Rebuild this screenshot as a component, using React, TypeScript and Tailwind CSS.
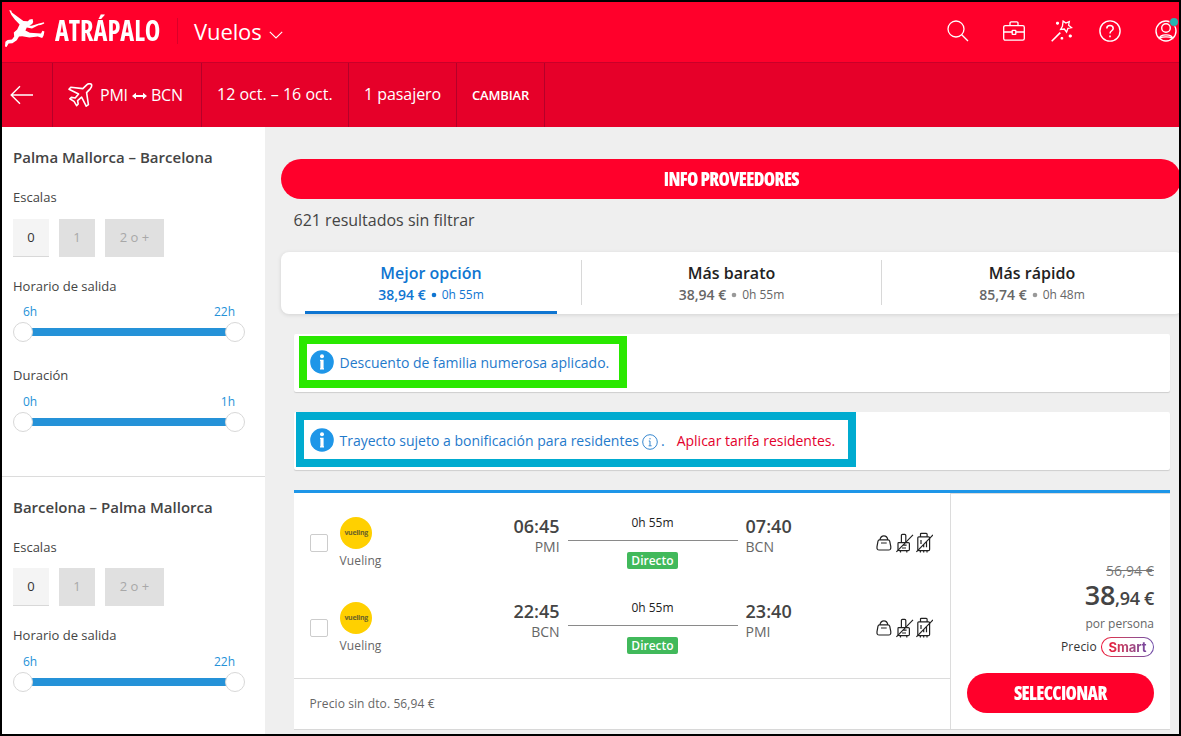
import type { ReactNode } from "react";

function Runner() {
  return (
    <svg width="40" height="38" viewBox="0 0 40 38" fill="#fff" className="shrink-0">
      <path d="M4.2 0.2L6.2 0.4L6.9 2.6L18.4 11L22.8 11.2L24.6 9.4L27.6 9L28.2 12L27.2 14L24.4 15.4L26.6 15.8L34 13.4L39 12.2L39.2 13.4L35.8 15L33.4 15.2L27 18.4L21.8 17.6L20.4 20.6L24.8 22.8L36 23.6L37.4 20.8L39.4 21.4L38.6 25.4L37.2 28L32.8 26.6L24.4 27.6L17.2 26.2L14 26.4L11.8 30.2L7.4 33.2L3.6 33.4L1.6 37L0 36.6L0.4 31.8L2.6 30L7 29.6L9.2 26.4L8.8 22.6L12.2 19.6L14.6 14.6L9.8 9.6L6.4 5Z" />
    </svg>
  );
}

function PillButton({ className, children }: { className: string; children: ReactNode }) {
  return (
    <button className={`h-10 shrink-0 rounded-full bg-[#ff002b] text-[19px] font-extrabold text-white [font-stretch:75%] ${className}`}>
      <span className="inline-block scale-x-[0.96] tracking-[-0.65px]">{children}</span>
    </button>
  );
}

function Header() {
  return (
    <header className="flex h-[61px] shrink-0 border-b border-[#c90029] bg-[#ff002b] text-white">
      <div className="flex w-[175px] shrink-0 pl-[3px] pt-2">
        <Runner />
        <span className="ml-[10px] inline-block h-[38px] origin-left scale-x-[0.907] text-[29px] leading-[40px] font-bold [font-stretch:75%]">
          ATRÁPALO
        </span>
      </div>
      <div className="mt-4 h-[26px] w-px bg-[#db0029]" />
      <div className="flex h-[58px] items-center pl-4">
        <span className="text-[22px] leading-[30px] tracking-[-0.1px]">Vuelos</span>
        <svg width="14" height="8" viewBox="0 0 14 8" fill="none" stroke="#fff" strokeWidth="1.1" className="mt-[7px] ml-[7px]">
          <path d="M0.8 0.8L7 7L13.2 0.8" />
        </svg>
      </div>
      <div className="ml-auto flex h-[58px] shrink-0 items-center">
        <svg width="22" height="22" viewBox="0 0 22 22" fill="none" stroke="#fff" strokeWidth="1.3" className="mr-[34px]">
          <circle cx="9" cy="9" r="8" />
          <path d="M14.7 14.7L21 21" />
        </svg>
        <svg width="22" height="20" viewBox="0 0 22 20" fill="none" stroke="#fff" strokeWidth="1.3" className="mr-[26px]">
          <rect x="0.7" y="4.6" width="20.6" height="14.6" rx="1.6" />
          <path d="M7 4.6V2.1A1.2 1.2 0 0 1 8.2 0.9H13.8A1.2 1.2 0 0 1 15 2.1V4.6M0.7 11H9.2M12.8 11H21.3" />
          <rect x="9.2" y="9.4" width="3.6" height="4" rx="0.4" />
        </svg>
        <svg width="22" height="22" viewBox="0 0 22 22" fill="none" stroke="#fff" strokeWidth="1.3" className="mr-[26px]">
          <path d="M0.7 21.2L9.3 12.6" strokeWidth="1.6" />
          <path d="M12.1 1.1L14.9 3.1L18.3 1.6L17.6 5.2L20.5 7.7L16.9 8.3L15.6 12.2L13.3 9L9.6 9.4L11.4 6.3Z" />
          <path d="M6.5 1.7V4.7M5 3.2H8M19.3 14.5V17.5M17.8 16H20.8M10.9 17V19.6M9.6 18.3H12.2" strokeWidth="1.8" />
        </svg>
        <svg width="22" height="22" viewBox="0 0 22 22" fill="none" stroke="#fff" strokeWidth="1.4" className="mr-[34px]">
          <circle cx="11" cy="11" r="10.1" />
          <path d="M7.8 8.5C7.8 4.6 14.2 4.6 14.2 8.5C14.2 10.9 11 10.7 11 13.6" strokeWidth="1.5" />
          <path d="M11 15.6V17.2" strokeWidth="1.6" />
        </svg>
        <svg width="24" height="26" viewBox="0 0 24 26" fill="none" stroke="#fff" strokeWidth="1.4" className="-mt-1">
          <circle cx="11" cy="15" r="10" />
          <circle cx="11" cy="12" r="4.3" />
          <path d="M4.6 22.2C5 17.8 17 17.8 17.4 22.2C14 20.4 8 20.4 4.6 22.2Z" />
          <circle cx="19" cy="6" r="4.6" fill="#ff002b" stroke="none" />
          <circle cx="19" cy="6" r="4" fill="#27b4b0" stroke="none" />
        </svg>
      </div>
    </header>
  );
}

function Cell({ width, children }: { width: string; children: ReactNode }) {
  return <div className={`${width} flex shrink-0 items-center border-r border-[#b50029]`}>{children}</div>;
}

function SearchBar() {
  return (
    <div className="flex h-16 shrink-0 bg-[#e60029] text-base leading-6 text-white">
      <Cell width="w-[51px]">
        <svg width="24" height="20" viewBox="0 0 24 20" fill="none" stroke="#fff" strokeWidth="1.4" className="ml-2">
          <path d="M23 10H1.2M10 1.2L1.2 10L10 18.8" />
        </svg>
      </Cell>
      <Cell width="w-[149px]">
        <svg width="25" height="24" viewBox="0 0 25 24" fill="none" stroke="#fff" strokeWidth="1.6" strokeLinejoin="round" className="ml-[15px]">
          <path d="M19 1.6C20.6 0.4 22.6 0.8 23.4 1.2C24 2.6 23.6 4.2 22.4 5.6L18.6 9.6L20.4 21.6L18.2 23.2L13.6 14.2L9.6 17.6L10.2 21L8.6 22.6L6 18.4L1.8 15.8L3.4 14.4L7.2 15L10.6 11L1 6.2L2.8 4.2L14.8 5.6Z" />
        </svg>
        <span className="ml-[7px] tracking-[-0.2px]">PMI</span>
        <svg width="15" height="8" viewBox="0 0 15 8" fill="#fff" className="mx-[4px] mt-[2px]">
          <path d="M0 4L4 0.8V3.1H11V0.8L15 4L11 7.2V4.9H4V7.2Z" />
        </svg>
        <span className="tracking-[-0.2px]">BCN</span>
      </Cell>
      <Cell width="w-[147px]">
        <span className="pb-[2px] pl-[15px]">12 oct. – 16 oct.</span>
      </Cell>
      <Cell width="w-[108px]">
        <span className="pb-[2px] pl-[15px] tracking-[-0.05px]">1 pasajero</span>
      </Cell>
      <Cell width="w-[88px]">
        <span className="pl-[15px] text-[13px] font-semibold tracking-[-0.15px]">CAMBIAR</span>
      </Cell>
    </div>
  );
}

function Range({ from, to }: { from: string; to: string }) {
  return (
    <div className="w-[232px]">
      <div className="flex h-[21px] justify-between px-[10px] text-xs leading-[22px] text-[#2592d8]">
        <span>{from}</span>
        <span>{to}</span>
      </div>
      <div className="flex h-5 items-center">
        <span className="z-10 size-5 shrink-0 rounded-full border border-[#d8d8d8] bg-white" />
        <span className="-mx-1 h-2 grow bg-[#2592d8]" />
        <span className="z-10 size-5 shrink-0 rounded-full border border-[#d8d8d8] bg-white" />
      </div>
    </div>
  );
}

function Stops() {
  return (
    <div className="flex h-[38px] gap-[10px] text-[13px]">
      <button className="w-9 border-b border-[#d8d8d8] bg-[#f4f4f4] pb-px text-[#333]">0</button>
      <button className="w-9 bg-[#e0e0e0] pb-[2px] text-[#a8a8a8]">1</button>
      <button className="w-[59px] bg-[#e0e0e0] pb-[2px] text-[#a8a8a8]">2 o +</button>
    </div>
  );
}

function Sidebar() {
  return (
    <aside className="w-[263px] shrink-0 bg-white text-[13px] leading-5 text-[#444]">
      <section className="h-[350px] border-b border-[#dcdcdc] pt-5 pl-[11px]">
        <h3 className="mb-5 text-[15px] font-semibold">Palma Mallorca – Barcelona</h3>
        <p className="mb-3">Escalas</p>
        <Stops />
        <p className="mt-[19px] mb-[5px]">Horario de salida</p>
        <Range from="6h" to="22h" />
        <p className="mt-[23px] mb-[6px]">Duración</p>
        <Range from="0h" to="1h" />
      </section>
      <section className="pt-5 pl-[11px]">
        <h3 className="mb-5 text-[15px] font-semibold">Barcelona – Palma Mallorca</h3>
        <p className="mb-[11px]">Escalas</p>
        <Stops />
        <p className="mt-[19px] mb-[6px]">Horario de salida</p>
        <Range from="6h" to="22h" />
      </section>
    </aside>
  );
}

function Tab({ title, price, time, active }: { title: string; price: string; time: string; active?: boolean }) {
  return (
    <div className={`w-full text-center ${active ? "text-[#0f75d1]" : "text-[#666]"}`}>
      <div className={`pt-[11px] text-base leading-5 font-semibold ${active ? "" : "text-[#222]"}`}>{title}</div>
      <div className="flex h-6 items-center justify-center text-xs">
        <b className="text-sm font-semibold">{price}</b>
        <svg width="16" height="6" viewBox="0 0 16 6" fill={active ? "#0f75d1" : "#999"}>
          <circle cx="8" cy="3" r="2.3" />
        </svg>
        <span>{time}</span>
      </div>
      {active && <div className="mt-1 ml-6 h-[3px] w-[252px] bg-[#0f75d1]" />}
    </div>
  );
}

function InfoDot() {
  return (
    <svg width="24" height="24" viewBox="0 0 24 24" className="shrink-0">
      <circle cx="12" cy="12" r="11.8" fill="#1e96e8" />
      <circle cx="12" cy="6.3" r="2" fill="#fff" />
      <path d="M10 9.8H13.6V18.2H14V19.6H10V18.2H10.4V11H10Z" fill="#fff" />
    </svg>
  );
}

function Luggage() {
  return (
    <svg width="57" height="22" viewBox="0 0 57 22" fill="none" stroke="#222" strokeWidth="1.2" strokeLinejoin="round">
      <path d="M3.4 7.8H12.2C13 7.8 13.4 8.3 13.7 9.1L14.8 14.7C15 17.1 14.2 18 12.6 18H3.2C1.6 18 0.7 17.1 1 14.7L2 9.1C2.2 8.3 2.6 7.8 3.4 7.8ZM3.9 7.8C4.4 5.4 5.8 3.8 7.9 3.8C10 3.8 11.4 5.4 11.9 7.8M5 11H10.7" />
      <path d="M25.4 10.6V3.4Q25.4 2.4 26.4 2.4H28.8Q29.8 2.4 29.8 3.4V10.6M22.6 10.6H32.4Q33.4 10.6 33.4 11.6V17.5Q33.4 18.7 32.2 18.7H23.2Q22 18.7 22 17.5V11.4Q22 10.6 22.6 10.6" />
      <path d="M27.4 13.1H30.6M26 16H30M24.5 18.7V20.4M30.8 18.7V20.4M20.4 19.8L37 2.8" />
      <path d="M44.5 4.8V2.2Q44.5 1.3 45.4 1.3H50.2Q51.1 1.3 51.1 2.2V4.8M42.8 4.8H52.6Q53.6 4.8 53.6 5.8V17.6Q53.6 18.7 52.5 18.7H42.9Q41.8 18.7 41.8 17.6V5.8Q41.8 4.8 42.8 4.8" />
      <path d="M45 8V12M50.5 10V15.2M47.7 12.5V15.2M44.4 18.7V20.4M47.7 18.7V20.4M51 18.7V20.4M40.4 19.8L57 2.8" />
    </svg>
  );
}

interface Leg {
  dep: string;
  from: string;
  arr: string;
  to: string;
}

function FlightRow({ dep, from, arr, to }: Leg) {
  return (
    <div className="flex h-[85px] text-[#444]">
      <span className="mt-[17px] ml-4 size-[18px] shrink-0 rounded-[2px] border border-[#ccc] bg-white" />
      <div className="ml-[11px] w-[52px] shrink-0 text-xs text-[#666]">
        <div className="ml-[1.4px] flex size-[31.5px] items-center justify-center rounded-full bg-[#ffd000] text-[7px] leading-none font-bold text-[#6b6329]">
          <span className="tracking-[-0.3px]">vueling</span>
        </div>
        <div className="h-5 pt-[2.5px] pl-[0.6px] leading-5 tracking-[0.1px]">Vueling</div>
      </div>
      <div className="w-[168.6px] shrink-0 text-right">
        <div className="text-lg leading-[18px] font-semibold">{dep}</div>
        <div className="pt-[3px] text-sm leading-[18px] text-[#666]">{from}</div>
      </div>
      <div className="ml-[8.4px] flex w-[170px] shrink-0 flex-col items-center">
        <span className="-mt-1 mr-px text-xs leading-[19px] text-[#222]">0h 55m</span>
        <span className="mt-2 h-px w-full bg-[#8a8a8a]" />
        <span className="mt-[11px] mr-px h-[17px] w-[51px] rounded-[2px] bg-[#41b95b] text-center text-xs leading-[17px] font-semibold text-white">
          Directo
        </span>
      </div>
      <div className="ml-[7.6px]">
        <div className="text-lg leading-[18px] font-semibold">{arr}</div>
        <div className="pt-[3px] text-sm leading-[18px] text-[#666]">{to}</div>
      </div>
      <div className="mt-[15px] mr-[17px] ml-auto">
        <Luggage />
      </div>
    </div>
  );
}

const LEGS: Leg[] = [
  { dep: "06:45", from: "PMI", arr: "07:40", to: "BCN" },
  { dep: "22:45", from: "BCN", arr: "23:40", to: "PMI" },
];

function ResultCard() {
  return (
    <article className="mt-5 ml-[13px] flex h-[240px] w-[876px] shrink-0 border-t-[3px] border-b border-t-[#1e96e8] border-b-[#d8d8d8] bg-white">
      <div className="flex w-[657px] shrink-0 flex-col border-r border-[#dcdcdc]">
        <div className="h-[186px] border-b border-[#dcdcdc] pt-6">
          {LEGS.map((leg) => (
            <FlightRow key={leg.dep} {...leg} />
          ))}
        </div>
        <div className="flex grow items-center pl-[15.5px] text-xs tracking-[0.1px] text-[#666]">Precio sin dto. 56,94 €</div>
      </div>
      <div className="flex grow flex-col items-end border-t border-[#dcdcdc] pt-[67px] pr-4 text-[#444]">
        <div className="text-sm leading-5 tracking-[0.1px] text-[#777] line-through">56,94 €</div>
        <div className="flex h-7 items-baseline leading-7 font-semibold tracking-[-0.3px]">
          <span className="text-[27px]">38</span>
          <span className="text-lg leading-7">,94 €</span>
        </div>
        <div className="mt-[5px] text-xs leading-5 text-[#666]">por persona</div>
        <div className="mt-[3px] flex h-5 items-center">
          <span className="mr-1 text-xs tracking-[0.2px] text-[#333]">Precio</span>
          <span className="inline-flex h-5 w-[53px] rounded-full bg-linear-to-r from-[#f0022f] to-[#6c4aa8] p-px">
            <span className="flex w-full items-center justify-center rounded-full bg-white">
              <span className="bg-linear-to-r from-[#f0022f] to-[#7447a0] bg-clip-text font-[Inter] text-[13px] leading-4 font-bold text-transparent">
                Smart
              </span>
            </span>
          </span>
        </div>
        <PillButton className="mt-4 w-[187px]">SELECCIONAR</PillButton>
      </div>
    </article>
  );
}

function Results() {
  return (
    <main className="flex grow flex-col overflow-hidden bg-[#efefef] pl-4">
      <PillButton className="mt-8 w-[900px]">INFO PROVEEDORES</PillButton>
      <p className="mt-[9px] ml-[12.5px] text-base leading-6 text-[#444]">621 resultados sin filtrar</p>
      <div className="mt-5 flex h-[62px] w-[902px] shrink-0 rounded-lg bg-white shadow-[0_1px_4px_rgba(0,0,0,0.12)]">
        <div className="w-[300px] shrink-0">
          <Tab title="Mejor opción" price="38,94 €" time="0h 55m" active />
        </div>
        <div className="mt-2 h-[45px] w-px bg-[#d8d8d8]" />
        <div className="w-[299px] shrink-0">
          <Tab title="Más barato" price="38,94 €" time="0h 55m" />
        </div>
        <div className="mt-2 h-[45px] w-px bg-[#d8d8d8]" />
        <div className="w-[300px] shrink-0">
          <Tab title="Más rápido" price="85,74 €" time="0h 48m" />
        </div>
      </div>
      <div className="mt-5 ml-[13px] h-[58px] w-[876px] shrink-0 rounded-[2px] bg-white pt-[2px] pl-[5.4px] shadow-[0_1px_1px_rgba(0,0,0,0.14)]">
        <div className="flex h-[52px] w-[328px] items-center border-[8px] border-[#29e800] pl-[2.6px] text-sm text-[#1f7acb]">
          <InfoDot />
          <span className="ml-[5.5px] pt-[2px]">Descuento de familia numerosa aplicado.</span>
        </div>
      </div>
      <div className="mt-5 ml-[13px] h-[58px] w-[876px] shrink-0 rounded-[2px] bg-white pl-[2.4px] shadow-[0_1px_1px_rgba(0,0,0,0.14)]">
        <div className="flex h-[55px] w-[560px] items-center border-[8px] border-[#00abd0] pl-[5.6px] text-sm text-[#1f7acb]">
          <InfoDot />
          <span className="ml-[5.5px] pt-[3px]">Trayecto sujeto a bonificación para residentes</span>
          <svg width="16" height="16" viewBox="0 0 16 16" fill="none" stroke="#3687cf" className="mt-1 ml-[3px] shrink-0">
            <circle cx="8" cy="8" r="7.3" />
            <path d="M8 4V5.4M6.8 7H8V11.6M6.6 11.8H9.6" />
          </svg>
          <span className="ml-[3px] pt-[3px]">.</span>
          <span className="ml-[12px] pt-[3px] text-[#e3002c]">Aplicar tarifa residentes.</span>
        </div>
      </div>
      <ResultCard />
    </main>
  );
}

export default function App() {
  return (
    <div className="flex h-[736px] w-[1181px] flex-col overflow-hidden border-2 border-black bg-[#efefef] font-['Open_Sans',sans-serif] whitespace-nowrap">
      <Header />
      <SearchBar />
      <div className="flex min-h-0 grow">
        <Sidebar />
        <Results />
      </div>
    </div>
  );
}
